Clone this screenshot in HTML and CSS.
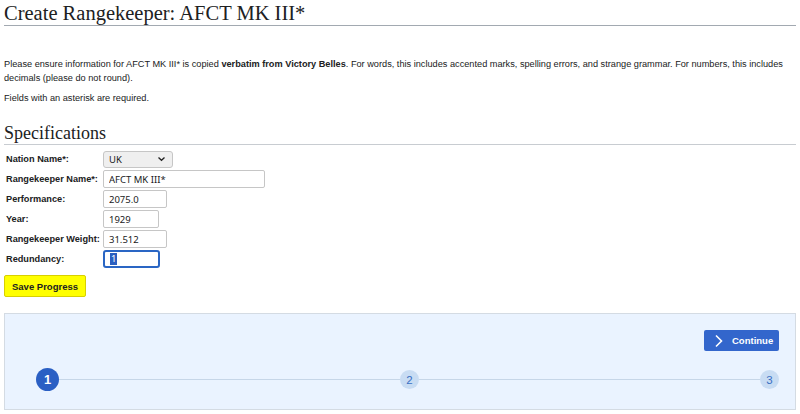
FILE: index.html
```html
<!DOCTYPE html>
<html>
<head>
<meta charset="utf-8">
<link rel="stylesheet" href="styles.css">
</head>
<body>
<h1 class="title">Create Rangekeeper: AFCT MK III*</h1>
<p class="intro">Please ensure information for AFCT MK III* is copied <b>verbatim from Victory Belles</b>. For words, this includes accented marks, spelling errors, and strange grammar. For numbers, this includes decimals (please do not round).</p>
<p class="note">Fields with an asterisk are required.</p>
<h2 class="section">Specifications</h2>
<div class="form">
  <div class="row"><label class="lbl">Nation Name*:</label><div class="select"><span>UK</span><svg width="9" height="6" viewBox="0 0 9 6"><path d="M1.5 1.5 L4.5 4.3 L7.5 1.5" fill="none" stroke="#222" stroke-width="1.3"/></svg></div></div>
  <div class="row"><label class="lbl">Rangekeeper Name*:</label><input class="inp w-name" value="AFCT MK III*"></div>
  <div class="row"><label class="lbl">Performance:</label><input class="inp w-perf" value="2075.0"></div>
  <div class="row"><label class="lbl">Year:</label><input class="inp w-year" value="1929"></div>
  <div class="row"><label class="lbl">Rangekeeper Weight:</label><input class="inp w-perf" value="31.512"></div>
  <div class="row"><label class="lbl">Redundancy:</label><div class="inp focus w-red"><span class="sel">1</span></div></div>
</div>
<button class="save">Save Progress</button>
<div class="panel">
  <div class="panel-top">
    <button class="continue"><svg width="10" height="14" viewBox="0 0 10 14"><path d="M2 1.5 L7.5 7 L2 12.5" fill="none" stroke="#fff" stroke-width="1.6"/></svg><span>Continue</span></button>
  </div>
  <div class="stepper">
    <span class="step active">1</span>
    <span class="line"></span>
    <span class="step">2</span>
    <span class="line"></span>
    <span class="step">3</span>
  </div>
</div>
</body>
</html>
```
FILE: styles.css
```css
* { box-sizing: border-box; }
body {
  margin: 0;
  padding: 0 4px;
  font-family: "Liberation Sans", Arial, sans-serif;
  font-size: 9.2px;
  color: #202122;
  background: #fff;
}
.title {
  font-family: "Liberation Serif", "Times New Roman", serif;
  font-weight: normal;
  font-size: 20.5px;
  line-height: 24px;
  margin: 1px 0 0;
  border-bottom: 1px solid #a2a9b1;
}
.intro {
  margin: 31px 0 0;
  line-height: 14px;
}
.note {
  margin: 6px 0 0;
  line-height: 14px;
}
.section {
  font-family: "Liberation Serif", "Times New Roman", serif;
  font-weight: normal;
  font-size: 18px;
  line-height: 22px;
  margin: 17px 0 0;
  border-bottom: 1px solid #c8ccd1;
}
.form {
  display: flex;
  flex-direction: column;
  gap: 2px;
  margin-top: 5px;
}
.row {
  display: flex;
  align-items: center;
  height: 18px;
}
.lbl {
  width: 99px;
  padding-left: 2px;
  font-weight: bold;
  white-space: nowrap;
}
.select {
  width: 70px;
  height: 17px;
  background: #efefef;
  border: 1px solid #c6c6c6;
  border-radius: 3px;
  display: flex;
  align-items: center;
  justify-content: space-between;
  padding: 0 6px 0 5px;
  font-family: "Noto Sans", sans-serif;
  font-size: 9.5px;
}
.inp {
  height: 18px;
  border: 1px solid #c6c6c6;
  border-radius: 2px;
  padding: 0 5px;
  font-family: "Noto Sans", sans-serif;
  font-size: 9.5px;
  color: #202122;
  background: #fff;
  display: flex;
  align-items: center;
}
.w-name { width: 162px; }
.w-perf { width: 64px; }
.w-year { width: 56px; }
.w-red { width: 57px; }
.focus {
  border: 2px solid #2a66c4;
  border-radius: 3px;
  padding-left: 5px;
}
.sel {
  background: #2b5fc0;
  color: #fff;
  line-height: 12px;
  padding: 0 1px;
}
.save {
  display: block;
  margin-top: 7px;
  height: 22px;
  width: 82px;
  background: #ffff00;
  border: 1px solid #d8d000;
  border-radius: 2px;
  font-family: "Liberation Sans", Arial, sans-serif;
  font-weight: bold;
  font-size: 9.5px;
  color: #202122;
  padding: 0;
}
.panel {
  margin-top: 16px;
  height: 97px;
  background: #eaf3ff;
  border: 1px solid #d4dbe3;
  display: flex;
  flex-direction: column;
}
.panel-top {
  display: flex;
  justify-content: flex-end;
  padding: 16px 16px 0 0;
}
.continue {
  height: 21px;
  width: 75px;
  background: #3366cc;
  border: 0;
  border-radius: 2px;
  color: #fff;
  font-family: "Liberation Sans", Arial, sans-serif;
  font-weight: bold;
  font-size: 9.5px;
  display: flex;
  align-items: center;
  gap: 8px;
  padding: 0 0 0 10px;
}
.stepper {
  display: flex;
  align-items: center;
  padding: 0 16px 0 31px;
  margin-top: 17px;
}
.line {
  flex: 1;
  height: 1px;
  background: #c6d6e8;
}
.step {
  width: 19px;
  height: 19px;
  border-radius: 50%;
  background: #c8dcf3;
  color: #3a6fc4;
  font-family: "Liberation Sans", Arial, sans-serif;
  font-size: 11.5px;
  display: flex;
  align-items: center;
  justify-content: center;
}
.step.active {
  width: 23px;
  height: 23px;
  background: #2a5fc4;
  color: #fff;
  font-weight: bold;
  font-size: 13px;
}
```
